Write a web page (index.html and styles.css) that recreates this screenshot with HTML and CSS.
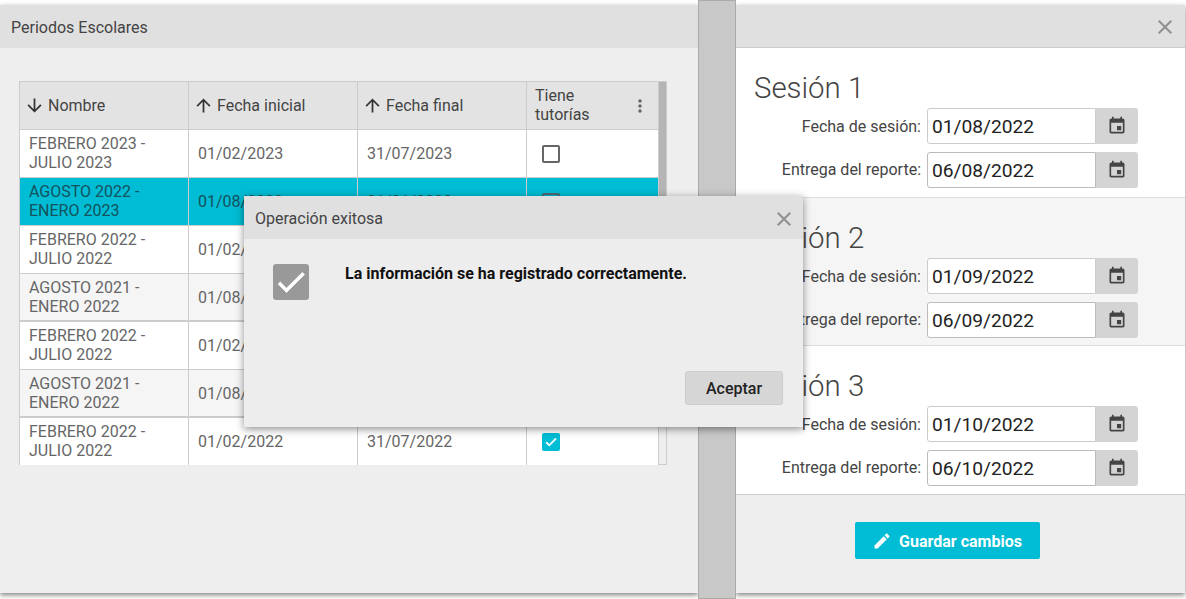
FILE: index.html
```html
<!DOCTYPE html>
<html lang="es">
<head>
    <meta charset="UTF-8">
    <title>Periodos Escolares</title>
    <link rel="stylesheet" href="styles.css">
</head>
<body>
    <svg class="icon-defs" width="0" height="0">
        <symbol id="i-up" viewBox="0 0 24 24"><path d="M4 12l1.41 1.41L11 7.83V20h2V7.83l5.58 5.59L20 12l-8-8-8 8z"/></symbol>
        <symbol id="i-down" viewBox="0 0 24 24"><path d="M20 12l-1.41-1.41L13 16.17V4h-2v12.17l-5.58-5.59L4 12l8 8 8-8z"/></symbol>
        <symbol id="i-close" viewBox="0 0 24 24"><path d="M19 6.41L17.59 5 12 10.59 6.41 5 5 6.41 10.59 12 5 17.59 6.41 19 12 13.41 17.59 19 19 17.59 13.41 12z"/></symbol>
        <symbol id="i-event" viewBox="0 0 24 24"><path d="M17 12h-5v5h5v-5zM16 1v2H8V1H6v2H5c-1.11 0-1.99.9-1.99 2L3 19c0 1.1.89 2 2 2h14c1.1 0 2-.9 2-2V5c0-1.1-.9-2-2-2h-1V1h-2zm3 18H5V8h14v11z"/></symbol>
        <symbol id="i-more" viewBox="0 0 24 24"><path d="M12 8c1.1 0 2-.9 2-2s-.9-2-2-2-2 .9-2 2 .9 2 2 2zm0 2c-1.1 0-2 .9-2 2s.9 2 2 2 2-.9 2-2-.9-2-2-2zm0 6c-1.1 0-2 .9-2 2s.9 2 2 2 2-.9 2-2-.9-2-2-2z"/></symbol>
        <symbol id="i-edit" viewBox="0 0 24 24"><path d="M3 17.25V21h3.75L17.81 9.94l-3.75-3.75L3 17.25zM20.71 7.04c.39-.39.39-1.02 0-1.41l-2.34-2.34c-.39-.39-1.02-.39-1.41 0l-1.83 1.83 3.75 3.75 1.83-1.83z"/></symbol>
        <symbol id="i-check" viewBox="0 0 24 24"><path d="M9 16.17L4.83 12l-1.42 1.41L9 19 21 7l-1.41-1.41z"/></symbol>
    </svg>

    <div class="desktop">
        <!-- ventana izquierda -->
        <section class="panel panel-left">
            <header class="panel-head">Periodos Escolares</header>
            <div class="grid-area">
                <div class="grid">
                    <div class="grid-inner">
                        <table class="grid-table">
                            <colgroup><col class="col-a"><col class="col-a"><col class="col-a"><col class="col-b"></colgroup>
                            <thead>
                                <tr>
                                    <th><svg class="sort"><use href="#i-down"/></svg>Nombre</th>
                                    <th><svg class="sort"><use href="#i-up"/></svg>Fecha inicial</th>
                                    <th><svg class="sort"><use href="#i-up"/></svg>Fecha final</th>
                                    <th class="th-last"><span>Tiene<br>tutorías</span><svg class="more"><use href="#i-more"/></svg></th>
                                </tr>
                            </thead>
                            <tbody>
                                <tr>
                                    <td>FEBRERO 2023 -<br>JULIO 2023</td><td>01/02/2023</td><td>31/07/2023</td>
                                    <td><span class="box"></span></td>
                                </tr>
                                <tr class="selected">
                                    <td>AGOSTO 2022 -<br>ENERO 2023</td><td>01/08/2022</td><td>31/01/2023</td>
                                    <td><span class="box"></span></td>
                                </tr>
                                <tr>
                                    <td>FEBRERO 2022 -<br>JULIO 2022</td><td>01/02/2022</td><td>31/07/2022</td>
                                    <td><span class="box"></span></td>
                                </tr>
                                <tr class="alt">
                                    <td>AGOSTO 2021 -<br>ENERO 2022</td><td>01/08/2021</td><td>31/01/2022</td>
                                    <td><span class="box"></span></td>
                                </tr>
                                <tr>
                                    <td>FEBRERO 2022 -<br>JULIO 2022</td><td>01/02/2022</td><td>31/07/2022</td>
                                    <td><span class="box"></span></td>
                                </tr>
                                <tr class="alt">
                                    <td>AGOSTO 2021 -<br>ENERO 2022</td><td>01/08/2021</td><td>31/01/2022</td>
                                    <td><span class="box"></span></td>
                                </tr>
                                <tr>
                                    <td>FEBRERO 2022 -<br>JULIO 2022</td><td>01/02/2022</td><td>31/07/2022</td>
                                    <td><span class="box checked"><svg><use href="#i-check"/></svg></span></td>
                                </tr>
                            </tbody>
                        </table>
                    </div>
                    <div class="scroll"><div class="scroll-thumb"></div></div>
                </div>
            </div>
        </section>

        <div class="splitter"></div>

        <!-- ventana derecha -->
        <section class="panel panel-right">
            <header class="panel-head head-right"><svg class="close"><use href="#i-close"/></svg></header>
            <div class="session">
                <h2>Sesión 1</h2>
                <div class="field"><label>Fecha de sesión:</label><div class="date">01/08/2022</div><div class="addon"><svg><use href="#i-event"/></svg></div></div>
                <div class="field"><label>Entrega del reporte:</label><div class="date">06/08/2022</div><div class="addon"><svg><use href="#i-event"/></svg></div></div>
            </div>
            <div class="session session-alt">
                <h2>Sesión 2</h2>
                <div class="field"><label>Fecha de sesión:</label><div class="date">01/09/2022</div><div class="addon"><svg><use href="#i-event"/></svg></div></div>
                <div class="field"><label>Entrega del reporte:</label><div class="date">06/09/2022</div><div class="addon"><svg><use href="#i-event"/></svg></div></div>
            </div>
            <div class="session">
                <h2>Sesión 3</h2>
                <div class="field"><label>Fecha de sesión:</label><div class="date">01/10/2022</div><div class="addon"><svg><use href="#i-event"/></svg></div></div>
                <div class="field"><label>Entrega del reporte:</label><div class="date">06/10/2022</div><div class="addon"><svg><use href="#i-event"/></svg></div></div>
            </div>
            <div class="panel-foot">
                <button class="btn-save"><svg><use href="#i-edit"/></svg>Guardar cambios</button>
            </div>
        </section>
    </div>

    <!-- mensaje -->
    <div class="dialog">
        <header class="dialog-head">Operación exitosa<svg class="close"><use href="#i-close"/></svg></header>
        <div class="dialog-body">
            <span class="dialog-icon"><svg><use href="#i-check"/></svg></span>
            <p>La información se ha registrado correctamente.</p>
        </div>
        <div class="dialog-foot"><button class="btn-ok">Aceptar</button></div>
    </div>
</body>
</html>
```

FILE: styles.css
```css
* {box-sizing: border-box;}
html, body {margin: 0; padding: 0;}
body {width: 1186px; height: 599px; overflow: hidden; background: #fff; font-family: Roboto, "Liberation Sans", sans-serif; color: #444; position: relative;}
.icon-defs {position: absolute;}
svg {fill: currentColor; display: block;}

.desktop {display: flex; height: 599px; padding-right: 1px;}
.panel {margin: 5px 0 6px; background: #eee; box-shadow: 0 2px 5px rgba(0,0,0,.5);}
.panel-left {width: 698px;}
.panel-right {width: 449px; display: flex; flex-direction: column;}
.panel-head {height: 43px; background: #e0e0e0; font-size: 16px; color: #444; padding: 0 11px; line-height: 45px;}
.head-right {display: flex; justify-content: flex-end; align-items: center; padding: 2px 8px 0 0; border-bottom: 1px solid #ccc;}
.close {width: 24px; height: 24px; color: #8f8f8f;}
.splitter {width: 38px; background: #c8c8c8; border: 1px solid #aaa; position: relative; z-index: 1;}

.grid-area {padding: 33px 31px 0 19px;}
.grid {display: flex; height: 384px; overflow: hidden;}
.grid-inner {width: 639px; overflow: hidden;}
.grid-table {width: 640px; border-collapse: collapse; table-layout: fixed; font-size: 16px;}
.col-a {width: 169px;}
.col-b {width: 133px;}
.grid-table th, .grid-table td {border: 1px solid #ccc; height: 48px; padding: 0 9px; line-height: 19px; text-align: left; font-weight: 400;}
.grid-table th {background: #e3e3e3; color: #444; padding-left: 4px;}
.grid-table td {background: #fff; color: #666;}
.grid-table td:first-child {padding-bottom: 2px;}
.grid-table tr.alt td {background: #f5f5f5; box-shadow: inset 0 -1px 0 #ccc;}
.grid-table tr.selected td {background: #00bcd4; color: #14525c;}
.grid-table td:last-child {padding-left: 15px;}
.grid-table th.th-last {padding: 0 8px 2px; position: relative;}
.sort {width: 21px; height: 21px; display: inline-block; vertical-align: -5px; margin-right: 3px; color: #333;}
.more {width: 20px; height: 20px; position: absolute; right: 9px; top: 14px; color: #666;}
.box {display: block; width: 18px; height: 18px; border: 2px solid #666; border-radius: 2px;}
.selected .box {border-color: #4d6a70;}
.box.checked {background: #00bcd4; border-color: #00bcd4; color: #fff;}
.box.checked svg {width: 14px; height: 14px; stroke: currentColor; stroke-width: 1.5;}
.scroll {width: 9px; background: #eee; border: 1px solid #ccc;}
.scroll-thumb {height: 130px; background: #b5b5b5;}

.session {height: 150px; background: #fff; padding: 23px 0 0; border-bottom: 1px solid #ddd;}
.session h2 {margin: 0 0 3px 18px; font-size: 29.4px; font-weight: 300; line-height: 34px; color: #444;}
.session-alt {background: #f5f5f5; height: 148px;}
.session-alt + .session {height: 149px; border-bottom-color: #ccc;}
.field {display: flex; align-items: stretch; height: 36px; margin-bottom: 8px;}
.field label {width: 185px; text-align: right; font-size: 16px; line-height: 38px; color: #444;}
.field + .field label {line-height: 36px;}
.date {width: 169px; margin-left: 6px; border: 1px solid #ccc; border-radius: 3px 0 0 3px; background: #fff; font-size: 19.2px; line-height: 35px; padding-left: 4px; color: #222;}
.field + .field .date {border-color: #bbb;}
.addon {width: 42px; background: #d4d4d4; border-radius: 0 3px 3px 0; display: flex; align-items: center; justify-content: center; color: #444;}
.addon svg {width: 20px; height: 20px;}
.panel-foot {flex: 1; display: flex; justify-content: center; padding-top: 27px; padding-right: 27px;}
.btn-save {display: flex; align-items: center; justify-content: center; width: 185px; height: 37px; border: 0; border-radius: 2px; padding: 1px 0 0; background: #00bcd4; color: #fff; font: 700 16px Roboto, sans-serif;}
.btn-save svg {width: 20px; height: 20px; margin-right: 7px;}

.dialog {position: absolute; left: 244px; top: 196px; width: 559px; height: 231px; background: #ededed; box-shadow: 0 2px 8px rgba(0,0,0,.45); z-index: 2;}
.dialog-head {height: 43px; background: #e0e0e0; font-size: 16px; padding: 2px 7px 0 11px; display: flex; justify-content: space-between; align-items: center; color: #444;}
.dialog-body {display: flex; height: 122px; padding: 25px 0 0 29px;}
.dialog-icon {width: 36px; height: 36px; background: #999; border-radius: 3px; color: #fff; display: flex; align-items: center; justify-content: center;}
.dialog-icon svg {width: 36px; height: 36px; stroke: currentColor; stroke-width: .5;}
.dialog-body p {margin: 0 0 0 36px; padding-top: 1px; font-size: 16px; font-weight: 700; line-height: 18px; color: #111;}
.dialog-foot {display: flex; justify-content: flex-end; padding: 10px 20px 0 0;}
.btn-ok {width: 98px; height: 34px; background: #d6d6d6; border: 1px solid #ccc; border-radius: 3px; color: #222; font: 500 16px Roboto, sans-serif;}
```
